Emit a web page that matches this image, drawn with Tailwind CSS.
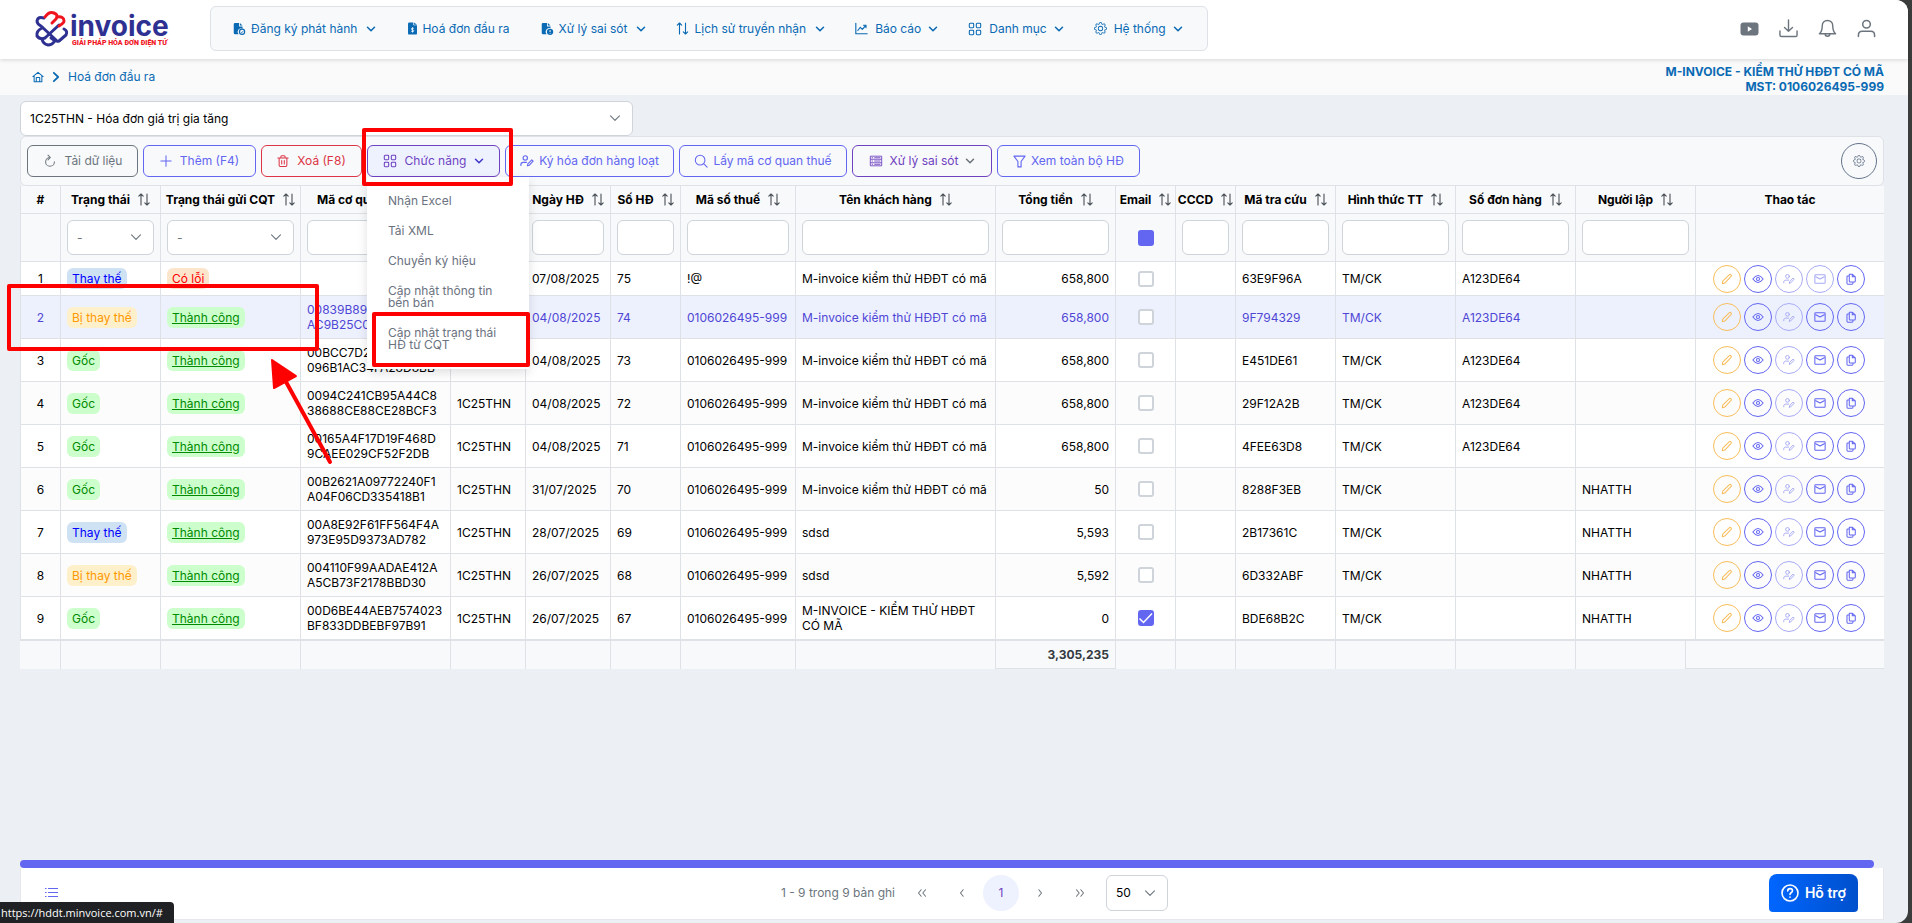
<!DOCTYPE html>
<html lang="vi">
<head>
    <meta charset="UTF-8">
    <meta name="viewport" content="width=device-width, initial-scale=1.0">
    <title>M-Invoice - Hoá đơn đầu ra</title>
    <script src="https://cdn.jsdelivr.net/npm/@tailwindcss/browser@4"></script>
</head>
<body class="bg-[#3a3d3c] font-['Inter','Noto_Sans',sans-serif] text-xs text-black">

    <!-- Icon sprite -->
    <svg class="hidden" xmlns="http://www.w3.org/2000/svg">
        <symbol id="i-down" viewBox="0 0 10 10" fill="none" stroke="currentColor" stroke-width="1.5" stroke-linecap="round" stroke-linejoin="round"><path d="M1.5 3.2 5 6.8l3.500-3.600"/></symbol>
        <symbol id="i-down-thin" viewBox="0 0 14 14" fill="none" stroke="currentColor" stroke-width="1.300" stroke-linecap="round" stroke-linejoin="round"><path d="m1.800 4.500 5.200 5.200 5.200-5.200"/></symbol>
        <symbol id="i-left" viewBox="0 0 12 12" fill="none" stroke="currentColor" stroke-width=".9" stroke-linecap="round" stroke-linejoin="round"><path d="M7 3.200 4.700 6 7 8.800"/></symbol>
        <symbol id="i-left2" viewBox="0 0 12 12" fill="none" stroke="currentColor" stroke-width=".9" stroke-linecap="round" stroke-linejoin="round"><path d="M5.300 3.200 3 6l2.300 2.800M9 3.200 6.700 6 9 8.800"/></symbol>
        <symbol id="i-sort" viewBox="0 0 12 13" fill="none" stroke="currentColor" stroke-width="1.100" stroke-linecap="round" stroke-linejoin="round"><path d="M3 12V1M.8 3.200 3 1l2.200 2.200M9 1v11M6.800 9.800 9 12l2.200-2.200"/></symbol>
        <symbol id="i-file-check" viewBox="0 0 16 16"><path fill="currentColor" d="M3.500 1H8v4h4v2.600a4 4 0 0 0-4.500 6.400H3.500A1.500 1.500 0 0 1 2 12.500v-10A1.500 1.500 0 0 1 3.500 1ZM9 1l3 3H9Z"/><circle cx="11.500" cy="11.200" r="3" fill="none" stroke="currentColor" stroke-width="1.300"/><path d="m10.200 11.200 1 1 1.700-1.800" fill="none" stroke="currentColor"/></symbol>
        <symbol id="i-file-alert" viewBox="0 0 16 16"><path fill="currentColor" d="M3.500 1H8v4h4v2.200a4.200 4.200 0 0 0-4.500 6.800H3.500A1.500 1.500 0 0 1 2 12.500v-10A1.500 1.500 0 0 1 3.500 1ZM9 1l3 3H9Z"/><circle cx="11.500" cy="11.200" r="3.600" fill="currentColor"/><path d="M11.500 9.300v2.200m0 1v.8" stroke="#fff" stroke-width="1.100"/></symbol>
        <symbol id="i-file-money" viewBox="0 0 16 16"><path fill="currentColor" d="M4 .5h5v3.500h4.500V14a1.500 1.500 0 0 1-1.500 1.500H4A1.500 1.500 0 0 1 2.500 14V2A1.500 1.500 0 0 1 4 .5Zm6 0 3.500 2.800H10Z"/><path d="M9.600 8c-.6-.7-3.200-.6-3.100.7.1 1.200 3.200.8 3.200 2.100 0 1.200-2.500 1.300-3.400.4M8 6.500V13" fill="none" stroke="#fff"/></symbol>
        <symbol id="i-chart" viewBox="0 0 16 16" fill="none" stroke="currentColor" stroke-width="1.400" stroke-linecap="round" stroke-linejoin="round"><path d="M1 1.500v13h14M3.500 10.500l3-4 2.500 2.500 4.500-5M10.500 4h3v3"/></symbol>
        <symbol id="i-grid" viewBox="0 0 16 16" fill="none" stroke="currentColor" stroke-width="1.200"><rect x="1.500" y="1.500" width="5" height="5" rx="1"/><rect x="9.500" y="1.500" width="5" height="5" rx="1"/><rect x="1.500" y="9.500" width="5" height="5" rx="1"/><rect x="9.500" y="9.500" width="5" height="5" rx="1"/></symbol>
        <symbol id="i-gear" viewBox="0 0 16 16" fill="currentColor"><path d="M8 4.754a3.246 3.246 0 1 0 0 6.492 3.246 3.246 0 0 0 0-6.492M5.754 8a2.246 2.246 0 1 1 4.492 0 2.246 2.246 0 0 1-4.492 0"/><path d="M9.796 1.343c-.527-1.790-3.065-1.790-3.592 0l-.094.319a.873.873 0 0 1-1.255.520l-.292-.160c-1.640-.892-3.433.902-2.540 2.541l.159.292a.873.873 0 0 1-.520 1.255l-.319.094c-1.790.527-1.790 3.065 0 3.592l.319.094a.873.873 0 0 1 .520 1.255l-.160.292c-.892 1.640.901 3.434 2.541 2.540l.292-.159a.873.873 0 0 1 1.255.520l.094.319c.527 1.790 3.065 1.790 3.592 0l.094-.319a.873.873 0 0 1 1.255-.520l.292.160c1.640.893 3.434-.902 2.540-2.541l-.159-.292a.873.873 0 0 1 .520-1.255l.319-.094c1.790-.527 1.790-3.065 0-3.592l-.319-.094a.873.873 0 0 1-.520-1.255l.160-.292c.893-1.640-.902-3.433-2.541-2.540l-.292.159a.873.873 0 0 1-1.255-.520zm-2.633.283c.246-.835 1.428-.835 1.674 0l.094.319a1.873 1.873 0 0 0 2.693 1.115l.291-.160c.764-.415 1.600.420 1.184 1.185l-.159.292a1.873 1.873 0 0 0 1.116 2.692l.318.094c.835.246.835 1.428 0 1.674l-.319.094a1.873 1.873 0 0 0-1.115 2.693l.160.291c.415.764-.420 1.600-1.185 1.184l-.291-.159a1.873 1.873 0 0 0-2.693 1.116l-.094.318c-.246.835-1.428.835-1.674 0l-.094-.319a1.873 1.873 0 0 0-2.692-1.115l-.292.160c-.764.415-1.600-.420-1.184-1.185l.159-.291A1.873 1.873 0 0 0 1.945 8.930l-.319-.094c-.835-.246-.835-1.428 0-1.674l.319-.094A1.873 1.873 0 0 0 3.060 4.377l-.160-.292c-.415-.764.420-1.600 1.185-1.184l.292.159a1.873 1.873 0 0 0 2.692-1.115z"/></symbol>
        <symbol id="i-youtube" viewBox="0 0 19 14"><rect x=".5" y=".5" width="18" height="13" rx="3" fill="currentColor"/><path d="m7.800 4.300 4.200 2.700-4.200 2.700Z" fill="#fff"/></symbol>
        <symbol id="i-download" viewBox="0 0 20 20" fill="none" stroke="currentColor" stroke-width="1.500" stroke-linecap="round" stroke-linejoin="round"><path d="M10 1v12M5.800 9l4.200 4 4.200-4M1 12.500V17q0 1.500 1.500 1.500h15q1.500 0 1.500-1.500v-4.500"/></symbol>
        <symbol id="i-bell" viewBox="0 0 20 20" fill="none" stroke="currentColor" stroke-width="1.500" stroke-linecap="round" stroke-linejoin="round"><path d="M10 1.500c-3.500 0-5.500 2.500-5.500 5.500 0 4.500-1.300 7-3 8.500h17c-1.700-1.500-3-4-3-8.500 0-3-2-5.500-5.500-5.500ZM7.500 15.500c0 3.500 5 3.500 5 0"/></symbol>
        <symbol id="i-user" viewBox="0 0 20 20" fill="none" stroke="currentColor" stroke-width="1.600" stroke-linecap="round"><circle cx="10" cy="5.500" r="4"/><path d="M1.500 18.500v-1.500c0-2.500 1.500-4 4-4h9c2.500 0 4 1.500 4 4v1.500"/></symbol>
        <symbol id="i-home" viewBox="0 0 14 14" fill="none" stroke="currentColor" stroke-width="1.200" stroke-linejoin="round" stroke-linecap="round"><path d="M1 6.500 7 1.500l6 5M2.500 5.500v7h9v-7M5 12.500v-5h4v5"/></symbol>
        <symbol id="i-refresh" viewBox="0 0 16 16" fill="none" stroke="currentColor" stroke-width="1.200" stroke-linecap="round" stroke-linejoin="round"><path d="M8 4a5 5 0 1 0 5 5M5.700 1.300 8.400 4 5.700 6.700"/></symbol>
        <symbol id="i-plus" viewBox="0 0 14 14" stroke="currentColor" stroke-width="1.200" stroke-linecap="round"><path d="M7 1v12M1 7h12"/></symbol>
        <symbol id="i-trash" viewBox="0 0 14 14" fill="none" stroke="currentColor" stroke-width="1.200" stroke-linecap="round" stroke-linejoin="round"><path d="M1 3.500h12M2.500 3.500v8.500q0 1.300 1.300 1.300h6.400q1.300 0 1.300-1.300V3.500M4.500 3.500V2q0-1.200 1.200-1.200h2.600Q9.500.8 9.500 2v1.500M5.500 6.500v4M8.500 6.500v4"/></symbol>
        <symbol id="i-sign" viewBox="0 0 16 16" fill="none" stroke="currentColor" stroke-width="1.300" stroke-linecap="round" stroke-linejoin="round"><circle cx="6" cy="4.500" r="2.500"/><path d="M1 13v-.8c0-1.700 1-2.700 2.700-2.700H7.500M8.500 13.500l.5-2.300 4.500-4.500 1.500 1.500-4.500 4.700Z"/></symbol>
        <symbol id="i-search" viewBox="0 0 16 16" fill="none" stroke="currentColor" stroke-width="1.200" stroke-linecap="round"><circle cx="7" cy="7" r="5.500"/><path d="m11 11 4 4"/></symbol>
        <symbol id="i-server" viewBox="0 0 16 16" fill="none" stroke="currentColor"><path d="M1.500 2.500h13v11h-13ZM1.500 6h13M1.500 10h13M3 4.300h1.500M6 4.300h7M3 8h1.500M6 8h7M3 11.800h1.500M6 11.800h7"/></symbol>
        <symbol id="i-filter" viewBox="0 0 14 14" fill="none" stroke="currentColor" stroke-width="1.200" stroke-linejoin="round"><path d="M1 1.200h12L8.700 7v5.800H5.300V7Z"/></symbol>
        <symbol id="i-pencil" viewBox="0 0 14 14" fill="none" stroke="currentColor" stroke-width="1.200" stroke-linejoin="round"><path d="m1.500 12.500.5-3 7.800-7.500q1-.8 1.900.1t.1 1.900L4.400 11.700Z"/></symbol>
        <symbol id="i-eye" viewBox="0 0 14 14" fill="none" stroke="currentColor" stroke-width="1.200"><path d="M1 7q6-8 12 0-6 8-12 0Z"/><circle cx="7" cy="7" r="1.800"/></symbol>
        <symbol id="i-mail" viewBox="0 0 14 14" fill="none" stroke="currentColor" stroke-width="1.200" stroke-linejoin="round"><rect x="1" y="2" width="12" height="10" rx=".8"/><path d="m1.500 4 5.500 3 5.500-3"/></symbol>
        <symbol id="i-copy" viewBox="0 0 14 14" fill="none" stroke="currentColor" stroke-width="1.200" stroke-linejoin="round"><path d="M5 1.500h3.700l3.300 3v5q0 1-1 1H6q-1 0-1-1ZM8.500 1.700v2.800h3.300M5 3.500H3.300q-1 0-1 1v7.500q0 1 1 1h5q1 0 1-1v-1.500"/></symbol>
        <symbol id="i-list" viewBox="0 0 13 11" stroke="currentColor" stroke-width="1.200"><path d="M0 1.500h1.500M3 1.500h10M0 5.500h1.500M3 5.500h10M0 9.500h1.500M3 9.500h10"/></symbol>
        <symbol id="i-help" viewBox="0 0 18 18" fill="none" stroke="currentColor" stroke-width="1.600" stroke-linecap="round"><circle cx="9" cy="9" r="8"/><path d="M6.700 7c0-3.200 4.800-3 4.800-.2C11.500 8.500 9 8.500 9 10.500M9 13v.2"/></symbol>
    </svg>

    <div class="relative mr-1 flex min-h-screen flex-col rounded-r-xl bg-[#eceff4] pb-[3px]">

        <!-- Header -->
        <header class="relative z-10 flex h-[59px] items-center rounded-tr-xl bg-white pr-8 pb-[2px] shadow-[0_1px_4px_rgba(0,0,0,0.15)]">
            <a href="#" class="ml-8 flex w-[178px] shrink-0 items-center" aria-label="M-Invoice">
                <svg class="h-10 w-[150px]" viewBox="0 -2 150 40">
                    <g fill="none" stroke="#2e3192" stroke-width="3" stroke-linecap="round" stroke-linejoin="round">
                        <path d="M12 7Q6 5 5 10q0 3 4 5l15 14"/>
                        <path d="M27 14 13 27q-5 2-8-2-1-5 5-8"/>
                        <path d="M10 28q1 5 6 6 4 0 6-3"/>
                        <path d="M32 18q4 2 2 6l-7 6q-4 1-8-3"/>
                        <path d="M13 6q4-6 9-4 5 2 2 6l-4 4" stroke="#f0141e"/>
                        <path d="M25 6q7-1 7 4 0 2-5 5" stroke="#f0141e"/>
                    </g>
                    <text x="38" y="25" class="font-['Inter'] text-[28px] font-bold" fill="#2e3192">invoice</text>
                    <text x="40" y="34" class="font-['Roboto'] text-[7px] font-black" fill="#f0141e">GIẢI PHÁP HÓA ĐƠN ĐIỆN TỬ</text>
                </svg>
            </a>
            <nav class="flex h-[45px] items-center gap-[30px] rounded-md border border-[#dee2e6] bg-[#f8f9fb] pr-6 pl-[21px] text-[#0a6ab4]">
                <a href="#" class="flex items-center gap-[5px]"><svg class="size-[14px]"><use href="#i-file-check"/></svg>Đăng ký phát hành<svg class="ml-1 size-[10px]"><use href="#i-down"/></svg></a>
                <a href="#" class="flex items-center gap-[3px]"><svg class="size-[13px]"><use href="#i-file-money"/></svg>Hoá đơn đầu ra</a>
                <a href="#" class="flex items-center gap-[5px]"><svg class="size-[14px]"><use href="#i-file-alert"/></svg>Xử lý sai sót<svg class="ml-1 size-[10px]"><use href="#i-down"/></svg></a>
                <a href="#" class="flex items-center gap-[5px]"><svg class="size-[13px]"><use href="#i-sort"/></svg>Lịch sử truyền nhận<svg class="ml-1 size-[10px]"><use href="#i-down"/></svg></a>
                <a href="#" class="flex items-center gap-[7px]"><svg class="size-[13px]"><use href="#i-chart"/></svg>Báo cáo<svg class="size-[10px]"><use href="#i-down"/></svg></a>
                <a href="#" class="flex items-center gap-[7px]"><svg class="size-[14px]"><use href="#i-grid"/></svg>Danh mục<svg class="size-[10px]"><use href="#i-down"/></svg></a>
                <a href="#" class="flex items-center gap-[7px]"><svg class="size-[13px]"><use href="#i-gear"/></svg>Hệ thống<svg class="size-[10px]"><use href="#i-down"/></svg></a>
            </nav>
            <div class="ml-auto flex items-center gap-5 text-[#6c757d]">
                <button type="button" aria-label="Video"><svg class="block h-[14px] w-[19px]"><use href="#i-youtube"/></svg></button>
                <button type="button" aria-label="Tải xuống"><svg class="block size-[19px]"><use href="#i-download"/></svg></button>
                <button type="button" aria-label="Thông báo"><svg class="block size-[19px]"><use href="#i-bell"/></svg></button>
                <button type="button" aria-label="Tài khoản"><svg class="block size-[19px]"><use href="#i-user"/></svg></button>
            </div>
        </header>

        <!-- Breadcrumb -->
        <div class="flex h-9 items-center justify-between bg-[#fafafa] pr-6 pl-8 text-[#0a6ab4]">
            <div class="flex items-center">
                <a href="#" aria-label="Trang chủ"><svg class="size-3"><use href="#i-home"/></svg></a>
                <svg class="mx-[6px] size-3 -rotate-90"><use href="#i-down"/></svg>
                <a href="#">Hoá đơn đầu ra</a>
            </div>
            <div class="pt-1 text-right leading-[15px] font-bold">
                <p>M-INVOICE - KIỂM THỬ HĐĐT CÓ MÃ</p>
                <p>MST: 0106026495-999</p>
            </div>
        </div>

        <main class="flex grow flex-col pt-[6px] pr-6 pl-5">
            <div class="relative w-[613px]">
                <select aria-label="Ký hiệu hóa đơn" class="h-[35px] w-full appearance-none rounded-md border border-[#ced4da] bg-white px-[9px]">
                    <option>1C25THN - Hóa đơn giá trị gia tăng</option>
                </select>
                <svg class="pointer-events-none absolute top-[11px] right-3 size-3 text-[#6c757d]"><use href="#i-down-thin"/></svg>
            </div>

            <!-- Toolbar -->
            <div class="flex h-[50px] items-center gap-[5px] rounded-md border border-[#dee2e6] bg-[#f8f9fb] px-[6px] text-[#6366f1]">
                <button type="button" class="flex h-8 w-[111px] items-center justify-center gap-2 rounded-md border border-[#6c757d] text-[#6c757d]"><svg class="size-[14px]"><use href="#i-refresh"/></svg>Tải dữ liệu</button>
                <button type="button" class="flex h-8 w-[113px] items-center justify-center gap-2 rounded-md border border-[#6366f1]"><svg class="size-3"><use href="#i-plus"/></svg>Thêm (F4)</button>
                <button type="button" class="flex h-8 w-[101px] items-center justify-center gap-2 rounded-md border border-[#dc3545] text-[#dc3545]"><svg class="size-3"><use href="#i-trash"/></svg>Xoá (F8)</button>
                <div class="relative z-20">
                    <button type="button" class="flex h-8 w-[133px] items-center justify-center gap-2 rounded-md border border-[#6f42c1] bg-[#eef2ff] text-[#6f42c1]"><svg class="size-[14px]"><use href="#i-grid"/></svg>Chức năng<svg class="size-[10px] text-[#4338ca]"><use href="#i-down"/></svg></button>
                    <div class="absolute top-8 left-0 w-[162px] bg-white py-[9px] leading-3 text-[#6b7280] shadow-[0_4px_10px_rgba(0,0,0,0.12)]">
                        <a href="#" class="block px-[21px] py-[9px]">Nhận Excel</a>
                        <a href="#" class="block px-[21px] py-[9px]">Tải XML</a>
                        <a href="#" class="block px-[21px] py-[9px]">Chuyển ký hiệu</a>
                        <a href="#" class="block px-[21px] py-[9px]">Cập nhật thông tin bên bán</a>
                        <a href="#" class="block px-[21px] py-[9px]">Cập nhật trạng thái HĐ từ CQT</a>
                        <div class="absolute -right-px bottom-[2px] left-[5px] h-[55px] rounded-xs border-4 border-[#ff0000]"></div>
                    </div>
                    <div class="pointer-events-none absolute -top-[17px] -left-[5px] h-[58px] w-[151px] rounded-xs border-4 border-[#ff0000]"></div>
                </div>
                <button type="button" class="flex h-8 w-[169px] items-center justify-center gap-[5px] rounded-md border border-[#6366f1]"><svg class="size-[14px]"><use href="#i-sign"/></svg>Ký hóa đơn hàng loạt</button>
                <button type="button" class="flex h-8 w-[168px] items-center justify-center gap-[5px] rounded-md border border-[#6366f1]"><svg class="size-[14px]"><use href="#i-search"/></svg>Lấy mã cơ quan thuế</button>
                <button type="button" class="flex h-8 w-[140px] items-center justify-center gap-[7px] rounded-md border border-[#6f42c1] text-[#6f42c1]"><svg class="size-[14px]"><use href="#i-server"/></svg>Xử lý sai sót<svg class="size-[10px] text-[#6c757d]"><use href="#i-down"/></svg></button>
                <button type="button" class="flex h-8 w-[143px] items-center justify-center gap-[5px] rounded-md border border-[#6366f1]"><svg class="size-[13px]"><use href="#i-filter"/></svg>Xem toàn bộ HĐ</button>
                <button type="button" aria-label="Cài đặt" class="ml-auto flex size-9 items-center justify-center rounded-full border border-[#64748b] text-[#64748b]"><svg class="size-3"><use href="#i-gear"/></svg></button>
            </div>

            <!-- Invoice table -->
            <table class="w-full table-fixed border-separate border-spacing-0 leading-[15px]">
                <colgroup>
                    <col class="w-[41px]"><col class="w-[100px]"><col class="w-[140px]"><col class="w-[150px]"><col class="w-[75px]"><col class="w-[85px]"><col class="w-[70px]"><col class="w-[115px]"><col class="w-[200px]"><col class="w-[120px]"><col class="w-[60px]"><col class="w-[60px]"><col class="w-[100px]"><col class="w-[120px]"><col class="w-[120px]"><col class="w-[120px]"><col>
                </colgroup>
                <thead class="bg-[#f8f9fb]">
                    <tr id="head-row"></tr>
                    <tr id="filter-row"></tr>
                </thead>
                <tbody id="rows"></tbody>
                <tfoot class="bg-[#f8f9fb]">
                    <tr id="foot-row"></tr>
                </tfoot>
            </table>

            <!-- Paginator -->
            <div class="mt-auto mr-[10px] h-2 rounded-full bg-[#6366f1]"></div>
            <div class="grid h-[52px] grid-cols-[1fr_auto_1fr] items-center border border-t-0 border-[#e5e7eb] bg-white pr-[25px] pb-[2px] pl-6 text-[#6c757d]">
                <button type="button" aria-label="Danh sách" class="justify-self-start text-[#6366f1]"><svg class="block h-[11px] w-[13px]"><use href="#i-list"/></svg></button>
                <div class="flex items-center pl-[46px]">
                    <span class="mr-[9px]">1 - 9 trong 9 bản ghi</span>
                    <button type="button" aria-label="Trang đầu" class="flex w-9 justify-center"><svg class="size-[14px]"><use href="#i-left2"/></svg></button>
                    <button type="button" aria-label="Trang trước" class="ml-1 flex w-9 justify-center"><svg class="size-[14px]"><use href="#i-left"/></svg></button>
                    <button type="button" class="mx-[3px] size-9 rounded-full bg-[#eef2ff] text-[#6f42c1]">1</button>
                    <button type="button" aria-label="Trang sau" class="flex w-9 justify-center"><svg class="size-[14px] rotate-180"><use href="#i-left"/></svg></button>
                    <button type="button" aria-label="Trang cuối" class="ml-1 flex w-9 justify-center"><svg class="size-[14px] rotate-180"><use href="#i-left2"/></svg></button>
                    <div class="relative ml-2">
                        <select aria-label="Số dòng" class="block h-9 w-[62px] appearance-none rounded-md border border-[#ced4da] bg-white px-[9px] text-black"><option>50</option></select>
                        <svg class="pointer-events-none absolute top-3 right-3 size-3"><use href="#i-down-thin"/></svg>
                    </div>
                </div>
                <button type="button" class="flex h-[38px] w-[89px] items-center justify-center gap-[6px] justify-self-end rounded-t-lg rounded-b-sm bg-linear-to-r from-[#0066ff] to-[#0050cc] text-sm font-semibold text-white"><svg class="size-[18px]"><use href="#i-help"/></svg>Hỗ trợ</button>
            </div>
        </main>

        <!-- Highlight over the selected invoice -->
        <div class="pointer-events-none absolute top-[284px] left-[7px] z-30 h-[67px] w-[312px] rounded-xs border-4 border-[#ff0000]"></div>
        <svg class="pointer-events-none absolute top-[355px] left-[265px] z-30 h-[115px] w-[70px]" viewBox="0 0 70 115">
            <path d="m20 25 45 82" stroke="#f00" stroke-width="4" stroke-linecap="round"/>
            <path d="M7 5 31 21 9 33Z" fill="#f00" stroke="#f00" stroke-width="2" stroke-linejoin="round"/>
        </svg>

        <!-- Link preview -->
        <div class="absolute bottom-0 left-0 z-30 h-[21px] w-[174px] rounded-tr-sm bg-[#202124] pl-px font-['Open_Sans',sans-serif] text-[11px] leading-[21px] text-white">https://hddt.minvoice.com.vn/#</div>
    </div>

    <script>
        const icon = (name, cls) => `<svg class="${cls}"><use href="#i-${name}"/></svg>`;
        const cellBorder = 'border-r border-b border-[#dee2e6] first:border-l last:border-r-0';

        const heads = ['#', 'Trạng thái', 'Trạng thái gửi CQT', 'Mã cơ quan thuế', 'Ký hiệu', 'Ngày HĐ', 'Số HĐ', 'Mã số thuế', 'Tên khách hàng', 'Tổng tiền', 'Email', 'CCCD', 'Mã tra cứu', 'Hình thức TT', 'Số đơn hàng', 'Người lập', 'Thao tác'];
        document.getElementById('head-row').innerHTML = heads.map((h, i) => `
            <th class="h-[28px] p-0 font-bold whitespace-nowrap ${cellBorder}">
                <div class="flex items-center justify-center gap-2">${h}${i === 0 || i === 16 ? '' : icon('sort', 'h-[13px] w-3 shrink-0 text-[#495057]')}</div>
            </th>`).join('');

        document.getElementById('filter-row').innerHTML = heads.map((h, i) => {
            let inner = `<input type="text" aria-label="${h}" class="block h-[35px] w-full rounded-md border border-[#ced4da] bg-white px-2">`;
            if (i === 0 || i === 16) inner = '';
            if (i === 1 || i === 2) inner = `
                <div class="relative">
                    <select aria-label="${h}" class="block h-[35px] w-full appearance-none rounded-md border border-[#ced4da] bg-white px-[9px] text-[#6c757d]"><option>-</option></select>
                    ${icon('down-thin', 'pointer-events-none absolute top-[11px] right-3 size-3 text-[#6c757d]')}
                </div>`;
            if (i === 10) inner = '<input type="checkbox" aria-label="Email" class="mx-auto block size-4 appearance-none rounded-[3px] bg-[#6366f1]">';
            return `<td class="h-12 px-[6px] py-0 ${cellBorder}">${inner}</td>`;
        }).join('');

        const badges = {
            'Thay thế': 'bg-[#cfe2f3] text-[#0000ff]',
            'Bị thay thế': 'bg-[#fff0cc] text-[#ff9900]',
            'Gốc': 'bg-[#ccffcc] text-[#008a00]',
            'Có lỗi': 'bg-[#fce5cd] text-[#ff0000]',
            'Thành công': 'bg-[#ccffcc] text-[#008a00] underline'
        };
        const badge = t => `<span class="inline-block h-[21px] rounded-md px-[5px] leading-[21px] whitespace-nowrap ${badges[t]}">${t}</span>`;

        const kt = 'M-invoice kiểm thử HĐĐT có mã';
        const mst = '0106026495-999';
        // trạng thái, CQT, mã CQT, ngày, số, MST, tên, tiền, email, tra cứu, đơn hàng, người lập
        const data = [
            ['Thay thế', 'Có lỗi', '', '07/08/2025', 75, '!@', kt, '658,800', 0, '63E9F96A', 'A123DE64', ''],
            ['Bị thay thế', 'Thành công', '00839B89<br>AC9B25C0', '04/08/2025', 74, mst, kt, '658,800', 0, '9F794329', 'A123DE64', ''],
            ['Gốc', 'Thành công', '00BCC7D2<br>096B1AC34FA28D8BB', '04/08/2025', 73, mst, kt, '658,800', 0, 'E451DE61', 'A123DE64', ''],
            ['Gốc', 'Thành công', '0094C241CB95A44C8<br>38688CE88CE28BCF3', '04/08/2025', 72, mst, kt, '658,800', 0, '29F12A2B', 'A123DE64', ''],
            ['Gốc', 'Thành công', '00165A4F17D19F468D<br>9CAEE029CF52F2DB', '04/08/2025', 71, mst, kt, '658,800', 0, '4FEE63D8', 'A123DE64', ''],
            ['Gốc', 'Thành công', '00B2621A09772240F1<br>A04F06CD335418B1', '31/07/2025', 70, mst, kt, '50', 0, '8288F3EB', '', 'NHATTH'],
            ['Thay thế', 'Thành công', '00A8E92F61FF564F4A<br>973E95D9373AD782', '28/07/2025', 69, mst, 'sdsd', '5,593', 0, '2B17361C', '', 'NHATTH'],
            ['Bị thay thế', 'Thành công', '004110F99AADAE412A<br>A5CB73F2178BBD30', '26/07/2025', 68, mst, 'sdsd', '5,592', 0, '6D332ABF', '', 'NHATTH'],
            ['Gốc', 'Thành công', '00D6BE44AEB7574023<br>BF833DDBEBF97B91', '26/07/2025', 67, mst, 'M-INVOICE - KIỂM THỬ HĐĐT CÓ MÃ', '0', 1, 'BDE68B2C', '', 'NHATTH']
        ];

        const action = (name, label, cls) => `<button type="button" aria-label="${label}" class="flex size-7 items-center justify-center rounded-full border ${cls}">${icon(name, 'size-3')}</button>`;

        document.getElementById('rows').innerHTML = data.map((r, i) => {
            const [st, cqt, code, date, no, tax, name, total, mail, key, order, by] = r;
            const check = `
                <div class="relative mx-auto size-4">
                    <input type="checkbox" aria-label="Email ${no}" ${mail ? 'checked' : ''} class="block size-4 appearance-none rounded-[3px] border-2 border-[#ced4da] bg-white checked:border-[#6366f1] checked:bg-[#6366f1]">
                    ${mail ? '<svg class="pointer-events-none absolute inset-0 size-4" viewBox="0 0 16 16" fill="none" stroke="#fff" stroke-width="1.500"><path d="m1.500 8.500 4 4 8.500-9"/></svg>' : ''}
                </div>`;
            const actions = `
                <div class="flex justify-center gap-[3px] pr-[2px]">
                    ${action('pencil', 'Sửa', 'border-[#f8bd5b] text-[#f8bd5b]')}
                    ${action('eye', 'Xem', 'border-[#6366f1] text-[#6366f1]')}
                    ${action('sign', 'Ký', 'border-[#a9abf5] text-[#a9abf5]')}
                    ${action('mail', 'Gửi email', i ? 'border-[#6366f1] text-[#6366f1]' : 'border-[#a9abf5] text-[#a9abf5]')}
                    ${action('copy', 'Sao chép', 'border-[#6366f1] text-[#6366f1]')}
                </div>`;
            const cells = [i + 1, badge(st), badge(cqt), code, '1C25THN', date, no, tax, name, total, check, '', key, 'TM/CK', order, by, actions];
            const rowCls = i === 1 ? 'bg-[#edf1fe] text-[#4f46d5]' : i % 2 ? 'bg-[#fcfcfc]' : 'bg-white';
            const height = i === 0 ? 'h-[34px]' : i === 8 ? 'h-11 border-b-2' : 'h-[43px]';
            return `<tr class="${rowCls}">${cells.map((c, n) => `<td class="px-[6px] py-0 ${height} ${n === 0 ? 'text-center' : n === 9 ? 'text-right' : ''} ${cellBorder}">${c}</td>`).join('')}</tr>`;
        }).join('');

        document.getElementById('foot-row').innerHTML = heads.slice(0, 15).map((h, i) =>
            `<td class="h-[28px] border-r border-[#dee2e6] px-[6px] py-0 text-right font-bold text-[#343a40] ${i === 9 ? 'border-b' : ''}">${i === 9 ? '3,305,235' : ''}</td>`
        ).join('') + `
            <td colspan="2" class="p-0">
                <div class="flex h-[28px]"><div class="w-[109px]"></div><div class="grow border-b border-l border-[#dee2e6]"></div></div>
            </td>`;
    </script>
</body>
</html>
